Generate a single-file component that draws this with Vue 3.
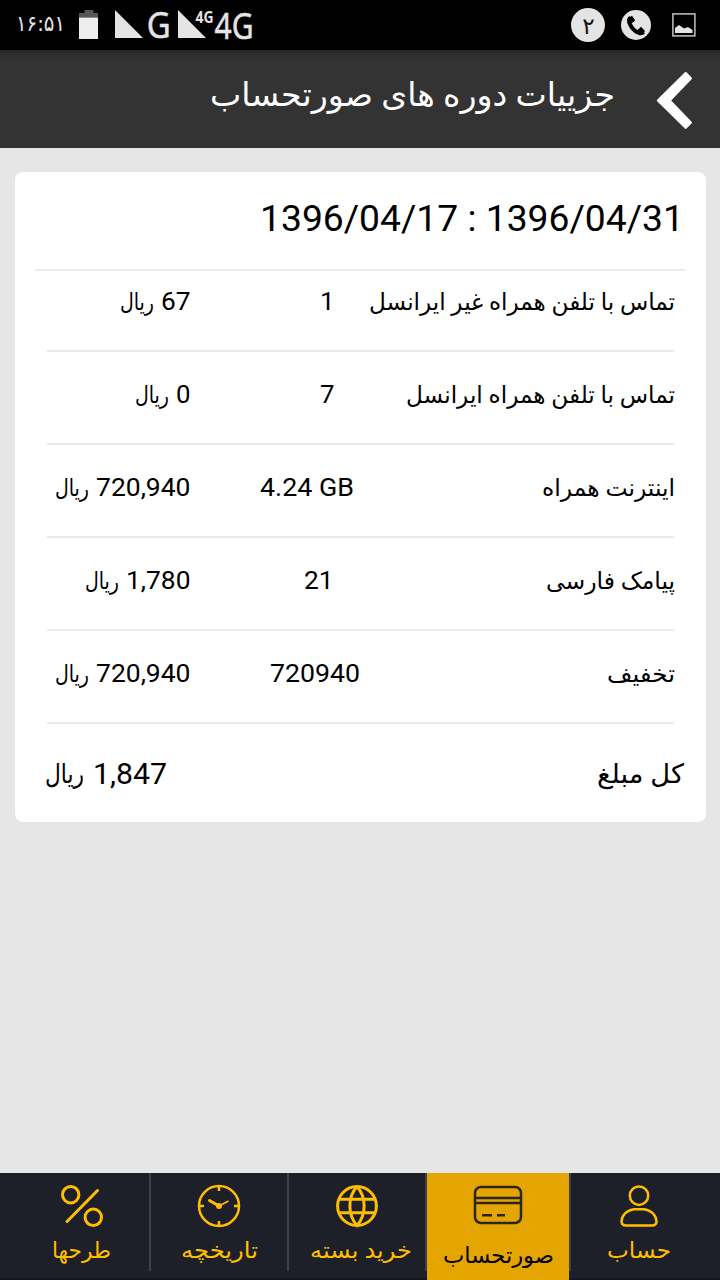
<script setup>
import { h } from 'vue'

// Single line of text set to an exact advance width; the box bottom is the baseline.
const FitText = (p) =>
  h('svg', { class: 'fit', width: p.w, height: p.size, style: { overflow: 'visible', display: 'block', flex: 'none' } }, [
    h('text', {
      x: p.w / 2, y: p.size, 'text-anchor': 'middle', fill: 'currentColor',
      'font-size': p.size, 'font-weight': p.bold ? 700 : 400, 'font-family': p.font || "Roboto, 'DejaVu Sans', sans-serif",
      direction: p.rtl ? 'rtl' : 'ltr', textLength: p.w, lengthAdjust: 'spacingAndGlyphs',
    }, p.text),
  ])
FitText.props = ['text', 'w', 'size', 'bold', 'font', 'rtl']

const rows = [
  { label: 'تماس با تلفن همراه غیر ایرانسل', lw: 306, qty: '1', qw: 14.5, qx: 320, amount: '67', aw: 29.5 },
  { label: 'تماس با تلفن همراه ایرانسل', lw: 269, qty: '7', qw: 14.5, qx: 320, amount: '0', aw: 14.5 },
  { label: 'اینترنت همراه', lw: 133, qty: '4.24 GB', qw: 94, qx: 260.5, amount: '720,940', aw: 94.5 },
  { label: 'پیامک فارسی', lw: 129, qty: '21', qw: 29.5, qx: 304.5, amount: '1,780', aw: 64.5 },
  { label: 'تخفیف', lw: 68, qty: '720940', qw: 90, qx: 270.5, amount: '720,940', aw: 94.5 },
]
</script>

<template>
  <div class="screen">
    <div class="status">
      <svg class="status-left" width="270" height="50" viewBox="0 0 270 50">
        <text x="40.5" y="31" text-anchor="middle" font-size="22" textLength="49" lengthAdjust="spacingAndGlyphs" direction="ltr" class="clock">۱۶:۵۱</text>
        <path d="M79 17.500V13h5.500v-3h9v3H98v4.500z" fill="#555" />
        <path d="M79 17.500h19V39H79z" fill="#eee" />
        <path d="M115 10v28h28zM178 10v28h28z" />
        <text x="158.700" y="37.800" text-anchor="middle" font-size="35.500" textLength="24" lengthAdjust="spacingAndGlyphs" stroke="#e4e4e4" stroke-width=".5">G</text>
        <text x="204.500" y="22.500" text-anchor="middle" font-size="15.500" font-weight="700" textLength="18" lengthAdjust="spacingAndGlyphs">4G</text>
        <text x="234" y="38.500" text-anchor="middle" font-size="36.500" textLength="39" lengthAdjust="spacingAndGlyphs" stroke="#e4e4e4" stroke-width=".5">4G</text>
      </svg>
      <svg width="170" height="50" viewBox="550 0 170 50">
        <circle cx="588" cy="25" r="17" />
        <text x="588.500" y="33.500" text-anchor="middle" font-size="23" class="badge">۲</text>
        <circle cx="636" cy="25" r="15" />
        <path d="M630.500 17.500c-4 3 1 12.500 8.500 15.500 2 .7 3.500.2 4.500-1" fill="none" stroke="#000" stroke-width="4" />
        <path d="M627.500 18.500l4.500-2.800 3.200 4.800-3.700 2.900zM637.500 30l3.500-3.200 4 4.200-2.700 3.500z" fill="#000" />
        <rect x="672.900" y="13.900" width="22" height="22" fill="none" stroke="#b8b8b0" stroke-width="1.600" />
        <path d="M675 33v-5l4-3 5 3.500 4-1.500 4.500 3V33z" />
      </svg>
    </div>

    <header class="header">
      <FitText text="جزییات دوره های صورتحساب" :w="405" :size="32.5" rtl />
      <svg class="back" width="36" height="58" viewBox="0 0 36 58">
        <path d="M29.700 2.200L34.700 7.400 13.600 29.500 34.700 51.600 29.700 56.700 2 29.500z" fill="#fff" stroke="#fff" stroke-width="2.400" stroke-linejoin="round" />
      </svg>
    </header>

    <main class="card">
      <div class="period"><FitText text="1396/04/17 : 1396/04/31" :w="424" :size="37.4" /></div>
      <div class="rule"></div>
      <div v-for="(r, i) in rows" :key="r.label" class="row" :class="{ first: i === 0 }">
        <div class="amount">
          <FitText class="raised" text="ریال" :w="34" :size="23.5" rtl />
          <FitText :text="r.amount" :w="r.aw" :size="26.3" />
        </div>
        <div class="qty" :style="{ paddingLeft: r.qx - 191 + 'px' }">
          <FitText :text="r.qty" :w="r.qw" :size="26.3" />
        </div>
        <FitText class="label" :text="r.label" :w="r.lw" :size="23.5" rtl />
      </div>
      <div class="total">
        <div class="amount-total">
          <FitText class="raised2" text="ریال" :w="39" :size="26.5" rtl />
          <FitText text="1,847" :w="74" :size="30.2" />
        </div>
        <FitText class="raised2" text="کل مبلغ" :w="87" :size="26.5" rtl />
      </div>
    </main>

    <nav class="nav">
      <div class="item left">
        <svg width="48" height="48" viewBox="-24 -24 48 48">
          <circle cx="-11.300" cy="-11.300" r="8.200" /><circle cx="11.300" cy="11.300" r="8.200" />
          <path d="M-15 15.500L15.500 -15.500" stroke-linecap="round" />
        </svg>
        <FitText text="طرحها" :w="59" :size="22.5" rtl />
      </div>
      <i class="sep"></i>
      <div class="item">
        <svg width="48" height="48" viewBox="-24 -24 48 48" stroke-width="2">
          <circle r="20" class="thin" />
          <path d="M0-20v5M0 20v-5M-20 0h5M20 0h-5" class="thin" />
          <path d="M-9.500-5.500L0 0" stroke-linecap="round" /><path d="M0 0L9.500-5" class="hand" />
          <circle r="1.500" />
        </svg>
        <FitText text="تاریخچه" :w="77" :size="22.5" rtl />
      </div>
      <i class="sep"></i>
      <div class="item">
        <svg width="48" height="48" viewBox="-24 -24 48 48">
          <circle r="19.400" />
          <path d="M-17-6.700H17M-17 6.700H17M0-19.500C-9.500-9-9.500 9 0 19.500C9.500 9 9.500-9 0-19.500" />
        </svg>
        <FitText class="buy" text="خرید بسته" :w="102" :size="22.5" rtl />
      </div>
      <i class="sep"></i>
      <div class="item active">
        <svg width="50" height="48" viewBox="-25 -24 50 48">
          <rect x="-23" y="-18" width="46" height="36" rx="6" /><path d="M-23-7h46M-23-2h46M-16 10.200h10M-1 10.200h8" />
        </svg>
        <FitText text="صورتحساب" :w="111" :size="22.5" rtl />
      </div>
      <i class="sep"></i>
      <div class="item right">
        <svg width="48" height="48" viewBox="-24 -24 48 48">
          <circle cy="-10.300" r="9.200" class="thin" />
          <path d="M-5 3.200H5C12 4 17 9 17.500 15q0 4.500-4.500 4.500H-13q-4.500 0-4.500-4.500C-17 9-12 4-5 3.200z" class="thin" />
        </svg>
        <FitText text="حساب" :w="64" :size="22.5" rtl />
      </div>
    </nav>
  </div>
</template>

<style>
body { margin: 0; }
</style>

<style scoped>
.screen { width: 720px; height: 1280px; background: #e6e6e6; display: flex; flex-direction: column; overflow: hidden; color: #000; }
.status { height: 50px; background: #000; display: flex; justify-content: space-between; flex: none; fill: #e4e4e4; font-family: "Noto Sans", sans-serif; }
.clock { font-family: "DejaVu Sans", sans-serif; }
.badge { fill: #111; font-family: "DejaVu Sans", sans-serif; }
.header { height: 98px; flex: none; box-sizing: border-box; background: linear-gradient(#262626, #333 8px); color: #fff; display: flex; justify-content: flex-end; align-items: flex-end; padding: 0 28px 43px 0; }
.back { margin: 0 0 -24px 41px; }
.card { margin: 24px 14px 0 15px; height: 650px; background: #fff; border-radius: 8px; flex: none; }
.period { height: 97px; box-sizing: border-box; display: flex; justify-content: flex-end; align-items: flex-end; padding: 0 22px 38px; }
.rule { height: 2px; margin: 0 20px; background: #ebebeb; }
.row { height: 93px; box-sizing: border-box; margin: 0 32px; border-bottom: 2px solid #ebebeb; display: flex; align-items: flex-end; padding-bottom: 40px; }
.row.first { height: 81px; }
.amount { width: 143.500px; display: flex; justify-content: flex-end; align-items: flex-end; gap: 7px; }
.raised { margin-bottom: 1px; }
.raised2 { margin-bottom: 2px; }
.label { margin: 0 -1px 1px 0; }
.qty { flex: 1; display: flex; min-width: 0; width: 0; box-sizing: border-box; }
.total { height: 60px; box-sizing: border-box; display: flex; justify-content: space-between; align-items: flex-end; padding: 0 22px 0 30px; }
.amount-total { display: flex; align-items: flex-end; gap: 9px; }
.nav { margin-top: auto; height: 107px; flex: none; display: flex; background: linear-gradient(#1e2029 105px, #15161c 105px); }
.sep { width: 2px; height: 98px; background: #3e4048; flex: none; }
.item { width: 136px; flex: none; box-sizing: border-box; display: flex; flex-direction: column; align-items: center; gap: 5px; padding-top: 8.500px; color: #ffbe00; }
.item > svg:first-child { flex: none; fill: none; stroke: currentColor; stroke-width: 3; }
.thin { stroke-width: 2.500; }
.hand { stroke-width: 1.500; }
.left { width: 149px; padding-left: 14px; }
.right { width: 149px; padding-right: 13px; }
.buy { margin-left: 8px; }
.active { width: 142px; background: #e4a500; color: #000; gap: 11px; padding-top: 8px; }
.active > svg:first-child { stroke: #29251f; stroke-width: 2.500; }
</style>
